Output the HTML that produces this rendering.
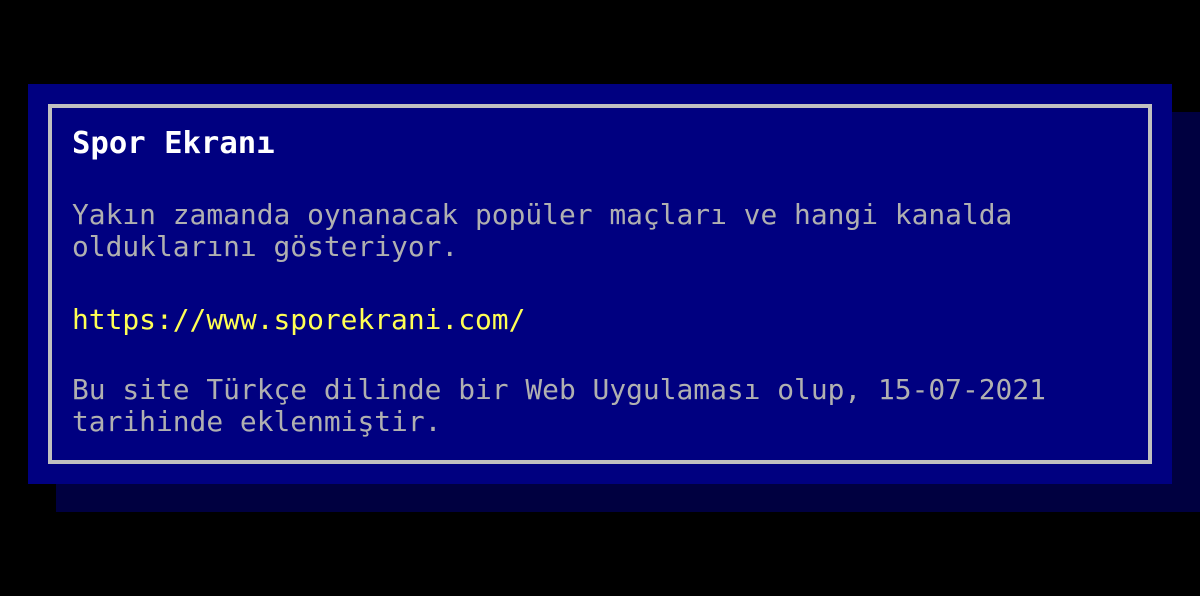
<!DOCTYPE html>
<html><head><meta charset="utf-8"><style>
html,body{margin:0;padding:0;background:#000;width:1200px;height:596px;overflow:hidden}
.sh{position:absolute;left:56px;top:112px;width:1144px;height:400px;background:#000040}
.box{position:absolute;left:28px;top:84px;width:1144px;height:400px;background:#000080}
.in{position:absolute;left:48px;top:104px;width:1096px;height:352px;border:4px solid #c0c0c0}
.t{position:absolute;left:72px;font-family:"DejaVu Sans Mono","Liberation Mono",monospace;font-size:27.9px;line-height:32px;color:#b0b0b0;white-space:pre}
.h{color:#fff;font-weight:bold;font-size:30.6px}
.y{color:#ffff54}
</style></head><body>
<div class="sh"></div><div class="box"></div><div class="in"></div>
<div class="t h" style="top:128px">Spor Ekranı</div>
<div class="t" style="top:199px">Yakın zamanda oynanacak popüler maçları ve hangi kanalda
olduklarını gösteriyor.</div>
<div class="t y" style="top:304px">https://www.sporekrani.com/</div>
<div class="t" style="top:374px">Bu site Türkçe dilinde bir Web Uygulaması olup, 15-07-2021
tarihinde eklenmiştir.</div>
</body></html>
